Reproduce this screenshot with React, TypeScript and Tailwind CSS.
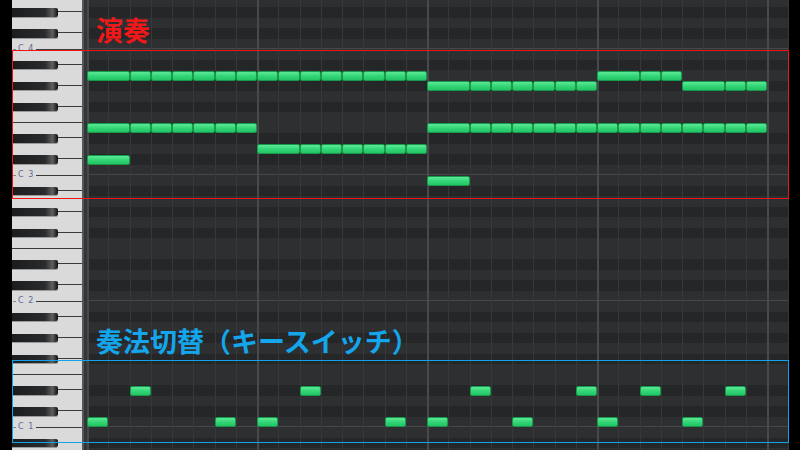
import React from 'react';

// ─── 定数 ──────────────────────────────────────────────

const ROW_H = 10.5;
const TOP_PITCH = 64; // E4 (C4 = 60)
const ROWS = 44;
const SUB = 21.25; // 8分音符の幅
const COLS = 34;
const BLACK_KEYS = [1, 3, 6, 8, 10];

const isBlack = (p: number) => BLACK_KEYS.includes(((p % 12) + 12) % 12);

type Note = { p: number; s: number; l: number };

// 最初は4分音符、残りは8分音符で埋める
function run(p: number, from: number, to: number): Note[] {
  const out: Note[] = [{ p, s: from, l: 2 }];
  for (let s = from + 2; s < to; s++) out.push({ p, s, l: 1 });
  return out;
}

const NOTES: Note[] = [
  ...run(57, 0, 16),
  ...run(57, 24, 28),
  ...run(56, 16, 24),
  ...run(56, 28, 32),
  ...run(52, 0, 8),
  ...run(52, 16, 32),
  ...run(50, 8, 16),
  { p: 49, s: 0, l: 2 },
  { p: 47, s: 16, l: 2 },
  // キースイッチ
  ...[2, 10, 18, 23, 26, 30].map((s) => ({ p: 27, s, l: 1 })),
  ...[0, 6, 8, 14, 16, 20, 24, 28].map((s) => ({ p: 24, s, l: 1 })),
];

const pitches = Array.from({ length: ROWS }, (_, i) => TOP_PITCH - i);

// ─── 鍵盤 ──────────────────────────────────────────────

function KeyRow({ p }: { p: number }) {
  const pc = ((p % 12) + 12) % 12;
  const octave = Math.floor(p / 12) - 1;
  return (
    <div className="relative h-[10.5px] shrink-0">
      {isBlack(p) && (
        <>
          <div className="absolute left-0 top-[1px] h-[8.5px] w-[46px] rounded-r-[2px] bg-[linear-gradient(to_right,#1b1c1e_0%,#2a2b2d_72%,#5d5e60_88%,#2b2b2c_96%,#0f0f10_100%)] shadow-[0_1px_0_#9a9a9a]" />
          <div className="absolute left-[46px] right-0 top-[4px] h-px bg-[#3a3a3a]" />
        </>
      )}
      {pc === 5 && <div className="absolute bottom-0 left-0 right-0 h-px bg-[#3a3a3a]" />}
      {pc === 0 && (
        <div className="absolute inset-x-0 bottom-[-4.5px] flex h-[9px] items-center">
          <span className="ml-[1px] h-px w-[3px] bg-[#7d85a0]" />
          <span className="px-[2px] font-['DejaVu_Sans',sans-serif] text-[8px] leading-none tracking-[1px] text-[#5c6a98]">
            C {octave}
          </span>
          <span className="h-px flex-1 bg-[#3a3a3a]" />
        </div>
      )}
    </div>
  );
}

function Keyboard() {
  return (
    <div className="relative h-full w-[70px] shrink-0 overflow-hidden bg-[#dadada]">
      <div className="mt-[-3.5px] flex flex-col">
        {pitches.map((p) => (
          <KeyRow key={p} p={p} />
        ))}
      </div>
    </div>
  );
}

// ─── グリッド ──────────────────────────────────────────────

function Grid() {
  return (
    <div className="relative h-full w-[702px] shrink-0 overflow-hidden">
      {/* 行 */}
      <div className="mt-[-3.5px] flex flex-col">
        {pitches.map((p) => (
          <div
            key={p}
            className={
              'h-[10.5px] shrink-0 ' +
              (isBlack(p) ? 'bg-[#252628] ' : 'bg-[#2e2f31] ') +
              (p % 12 === 0 ? 'border-b border-[#47484a]' : '')
            }
          />
        ))}
      </div>

      {/* 縦線 */}
      <div className="absolute inset-0 flex">
        {Array.from({ length: COLS }, (_, i) => (
          <div
            key={i}
            className={
              'h-full w-[21.25px] shrink-0 ' +
              (i % 8 === 0 ? 'border-l-2 border-[#48494b]' : 'border-l border-[#37383a]')
            }
          />
        ))}
      </div>

      {/* ノート */}
      {NOTES.map((n, i) => (
        <div
          key={i}
          className="absolute rounded-[2px] border border-[#179a4b] bg-gradient-to-b from-[#5ae997] via-[#33d676] to-[#22c465]"
          style={{
            left: n.s * SUB,
            width: n.l * SUB,
            top: (TOP_PITCH - n.p) * ROW_H - 3.5 + 0.5,
            height: ROW_H - 0.5,
          }}
        />
      ))}
    </div>
  );
}

// ─── ページ ──────────────────────────────────────────────

export default function App() {
  return (
    <div className="relative flex h-[450px] w-[800px] overflow-hidden bg-black">
      <div className="w-[12px] shrink-0 bg-black" />
      <Keyboard />
      <div className="flex h-full shrink-0">
        <div className="w-[2px] bg-[#56575a]" />
        <div className="w-[3px] bg-[#343537]" />
      </div>
      <Grid />
      <div className="w-[11px] shrink-0 bg-black" />

      {/* 注釈 */}
      <div className="absolute left-[12px] top-[50px] h-[149px] w-[777px] border border-[#f01414]" />
      <div className="absolute left-[12px] top-[360px] h-[83px] w-[777px] border border-[#12a4ea]" />
      <div className="absolute left-[96px] top-[16px] font-['Noto_Sans_CJK_JP',sans-serif] text-[27px] font-bold leading-none text-[#f01818]">
        演奏
      </div>
      <div className="absolute left-[96px] top-[327px] font-['Noto_Sans_CJK_JP',sans-serif] text-[27px] font-bold leading-none text-[#14a6ec]">
        奏法切替（キースイッチ）
      </div>
    </div>
  );
}
